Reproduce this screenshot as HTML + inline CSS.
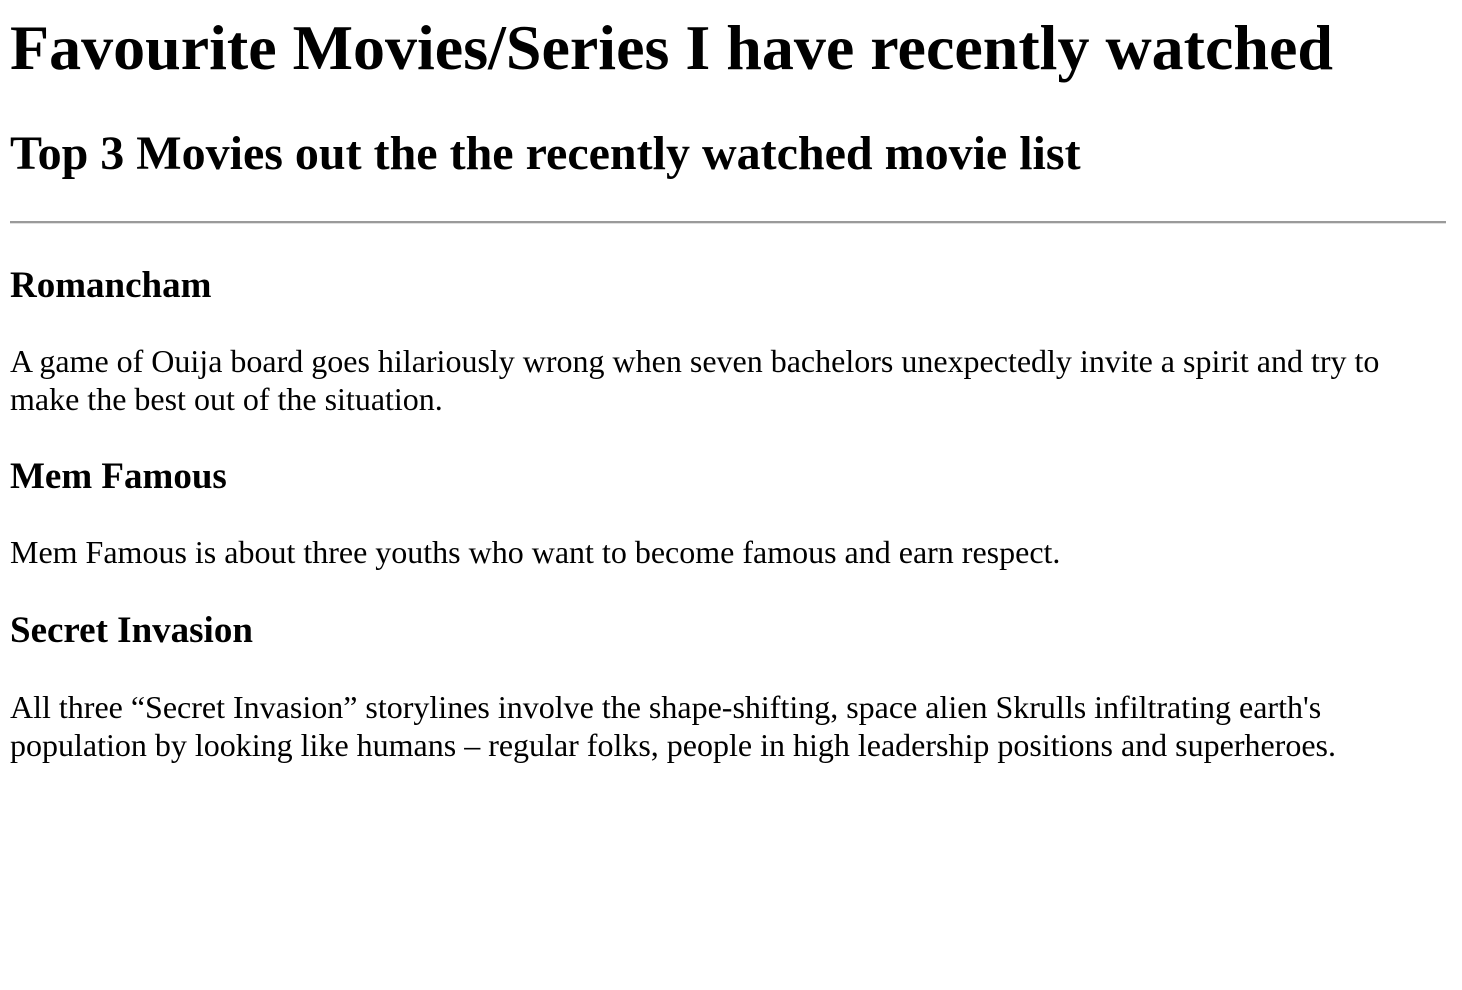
<!DOCTYPE html>
<html><head><meta charset="utf-8"><style>
html,body{margin:0;padding:0;background:#fff;color:#000;}
body{width:1462px;height:990px;position:relative;overflow:hidden;font-family:"Liberation Serif","Times New Roman",serif;}
.a{position:absolute;left:10px;width:1440px;margin:0;}
h1{font-size:64px;line-height:74px;font-weight:bold;}
h2{font-size:48px;line-height:55px;font-weight:bold;}
h3{font-size:37px;line-height:43px;font-weight:bold;}
p{font-size:32px;line-height:38px;}
hr.a{top:221px;width:1436px;height:0;border:0;border-top:2px solid #9a9a9a;border-bottom:1px solid #e0e0e0;}
</style></head><body>
<h1 class="a" style="top:11px">Favourite Movies/Series I have recently watched</h1>
<h2 class="a" style="top:126px">Top 3 Movies out the the recently watched movie list</h2>
<hr class="a">
<h3 class="a" style="top:264px">Romancham</h3>
<p class="a" style="top:342px">A game of Ouija board goes hilariously wrong when seven bachelors unexpectedly invite a spirit and try to make the best out of the situation.</p>
<h3 class="a" style="top:455px">Mem Famous</h3>
<p class="a" style="top:533px">Mem Famous is about three youths who want to become famous and earn respect.</p>
<h3 class="a" style="top:609px">Secret Invasion</h3>
<p class="a" style="top:688px">All three “Secret Invasion” storylines involve the shape-shifting, space alien Skrulls infiltrating earth's population by looking like humans – regular folks, people in high leadership positions and superheroes.</p>
</body></html>
